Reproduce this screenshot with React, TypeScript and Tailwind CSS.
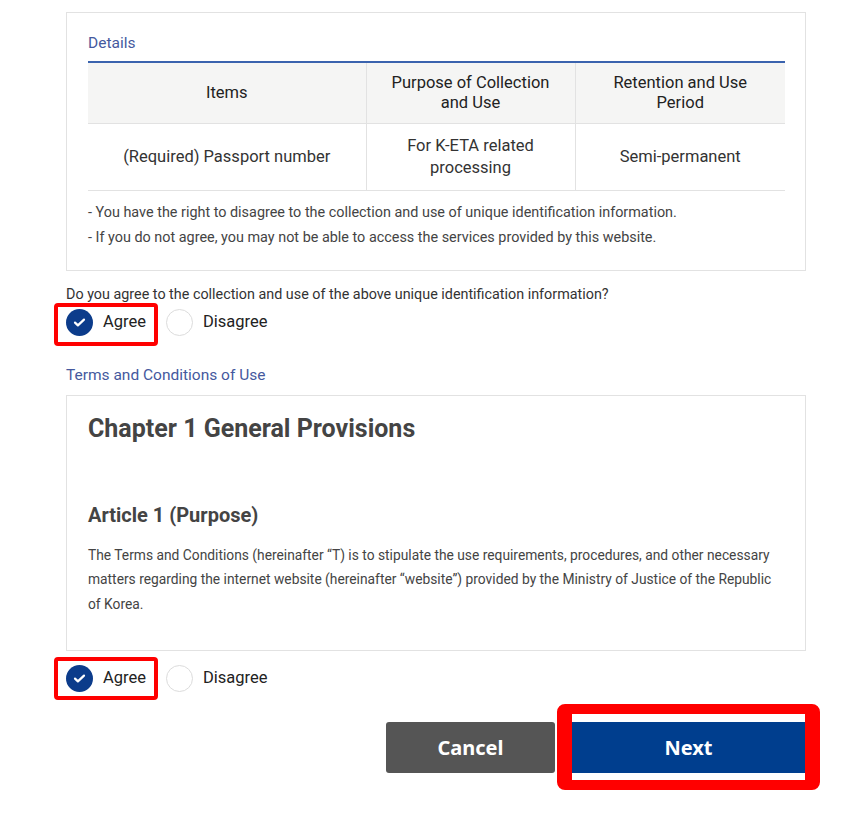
import React from "react";

const rows = [
  { item: "(Required) Passport number", purpose: "For K-ETA related processing", period: "Semi-permanent" },
];

function Radio({ checked, label }: { checked?: boolean; label: string }) {
  return (
    <span className="flex items-center gap-[10px]">
      {checked ? (
        <span className="w-[27px] h-[27px] rounded-full bg-[#0c3c8b] flex items-center justify-center">
          <svg width="15" height="15" viewBox="0 0 15 15" fill="none">
            <path d="M3 7.6l2.9 2.8L12 4.6" stroke="#fff" strokeWidth="2.2" strokeLinecap="round" strokeLinejoin="round" />
          </svg>
        </span>
      ) : (
        <span className="w-[27px] h-[27px] rounded-full border border-[#dcdcdc] bg-white" />
      )}
      <span className="text-[16.5px] text-[#222]">{label}</span>
    </span>
  );
}

function AgreeRow({ first }: { first?: boolean }) {
  return (
    <div className="flex items-center gap-[10px] h-[28px]">
      <span className="relative">
        <Radio checked label="Agree" />
        <span
          className={
            first
              ? "absolute left-[-12px] right-[-12px] top-[-6px] bottom-[-10px] border-[4px] border-[#ff0000] rounded-[4px]"
              : "absolute left-[-12px] right-[-12px] top-[-8px] bottom-[-8px] border-[4px] border-[#ff0000] rounded-[4px]"
          }
        />
      </span>
      <span className="ml-[10px]">
        <Radio label="Disagree" />
      </span>
    </div>
  );
}

export default function App() {
  return (
    <div className="bg-white w-[847px] min-h-[819px] pt-[12px] font-['Roboto',sans-serif]">
      <div className="ml-[66px] w-[740px]">
        <div className="border border-[#e2e2e2] pl-[21px] pr-[20px] pt-[19px] pb-[20px]">
          <div className="text-[15.5px] leading-[22px] text-[#45599e]">Details</div>
          <table className="mt-[7px] w-[697px] border-collapse border-t-2 border-[#3a63ae] text-[16.5px] text-[#333] text-center">
            <thead>
              <tr className="bg-[#f5f5f4] h-[61px] border-b border-[#e2e2e2]">
                <th className="font-normal w-[278px] leading-5 px-3 text-[#222]">Items</th>
                <th className="font-normal w-[209px] leading-5 px-5 border-l border-[#e2e2e2] text-[#222]">Purpose of Collection and Use</th>
                <th className="font-normal w-[210px] leading-5 px-8 border-l border-[#e2e2e2] text-[#222]">Retention and Use Period</th>
              </tr>
            </thead>
            <tbody>
              {rows.map((r) => (
                <tr key={r.item} className="h-[67px] border-b border-[#e2e2e2]">
                  <td className="leading-[22px] px-3">{r.item}</td>
                  <td className="leading-[22px] px-6 border-l border-[#e2e2e2]">{r.purpose}</td>
                  <td className="leading-[22px] px-3 border-l border-[#e2e2e2]">{r.period}</td>
                </tr>
              ))}
            </tbody>
          </table>
          <div className="mt-[9px] text-[14.4px] leading-[25px] text-[#444]">
            <p>- You have the right to disagree to the collection and use of unique identification information.</p>
            <p>- If you do not agree, you may not be able to access the services provided by this website.</p>
          </div>
        </div>

        <p className="mt-[14px] text-[14.35px] leading-[20px] text-[#333]">
          Do you agree to the collection and use of the above unique identification information?
        </p>
        <div className="mt-[4px]">
          <AgreeRow first />
        </div>

        <div className="mt-[27px] text-[15.5px] leading-[22px] text-[#45599e]">Terms and Conditions of Use</div>
        <div className="mt-[9px] border border-[#e2e2e2] pl-[21px] pr-[20px] pt-[17px] pb-[34px] text-[#444]">
          <h2 className="text-[25px] leading-[32px] font-bold">Chapter 1 General Provisions</h2>
          <h3 className="mt-[56px] text-[20px] leading-[28px] font-bold">Article 1 (Purpose)</h3>
          <p className="mt-[14px] text-[13.8px] leading-[24.5px]">
            The Terms and Conditions (hereinafter “T) is to stipulate the use requirements, procedures, and other necessary
            matters regarding the internet website (hereinafter “website”) provided by the Ministry of Justice of the Republic
            of Korea.
          </p>
        </div>

        <div className="mt-[13px]">
          <AgreeRow />
        </div>

        <div className="mt-[30px] flex justify-end gap-[17px] pr-[1px] font-['Noto_Sans',sans-serif]">
          <button className="w-[169px] h-[51px] rounded-[3px] bg-[#555555] text-white text-[20px] font-bold">Cancel</button>
          <span className="relative">
            <button className="w-[233px] h-[51px] bg-[#003e8e] text-white text-[20px] font-bold">Next</button>
            <span className="absolute left-[-15px] right-[-15px] top-[-18px] bottom-[-17px] border-x-[15px] border-y-[10px] border-[#ff0000] rounded-[8px]" />
          </span>
        </div>
      </div>
    </div>
  );
}
